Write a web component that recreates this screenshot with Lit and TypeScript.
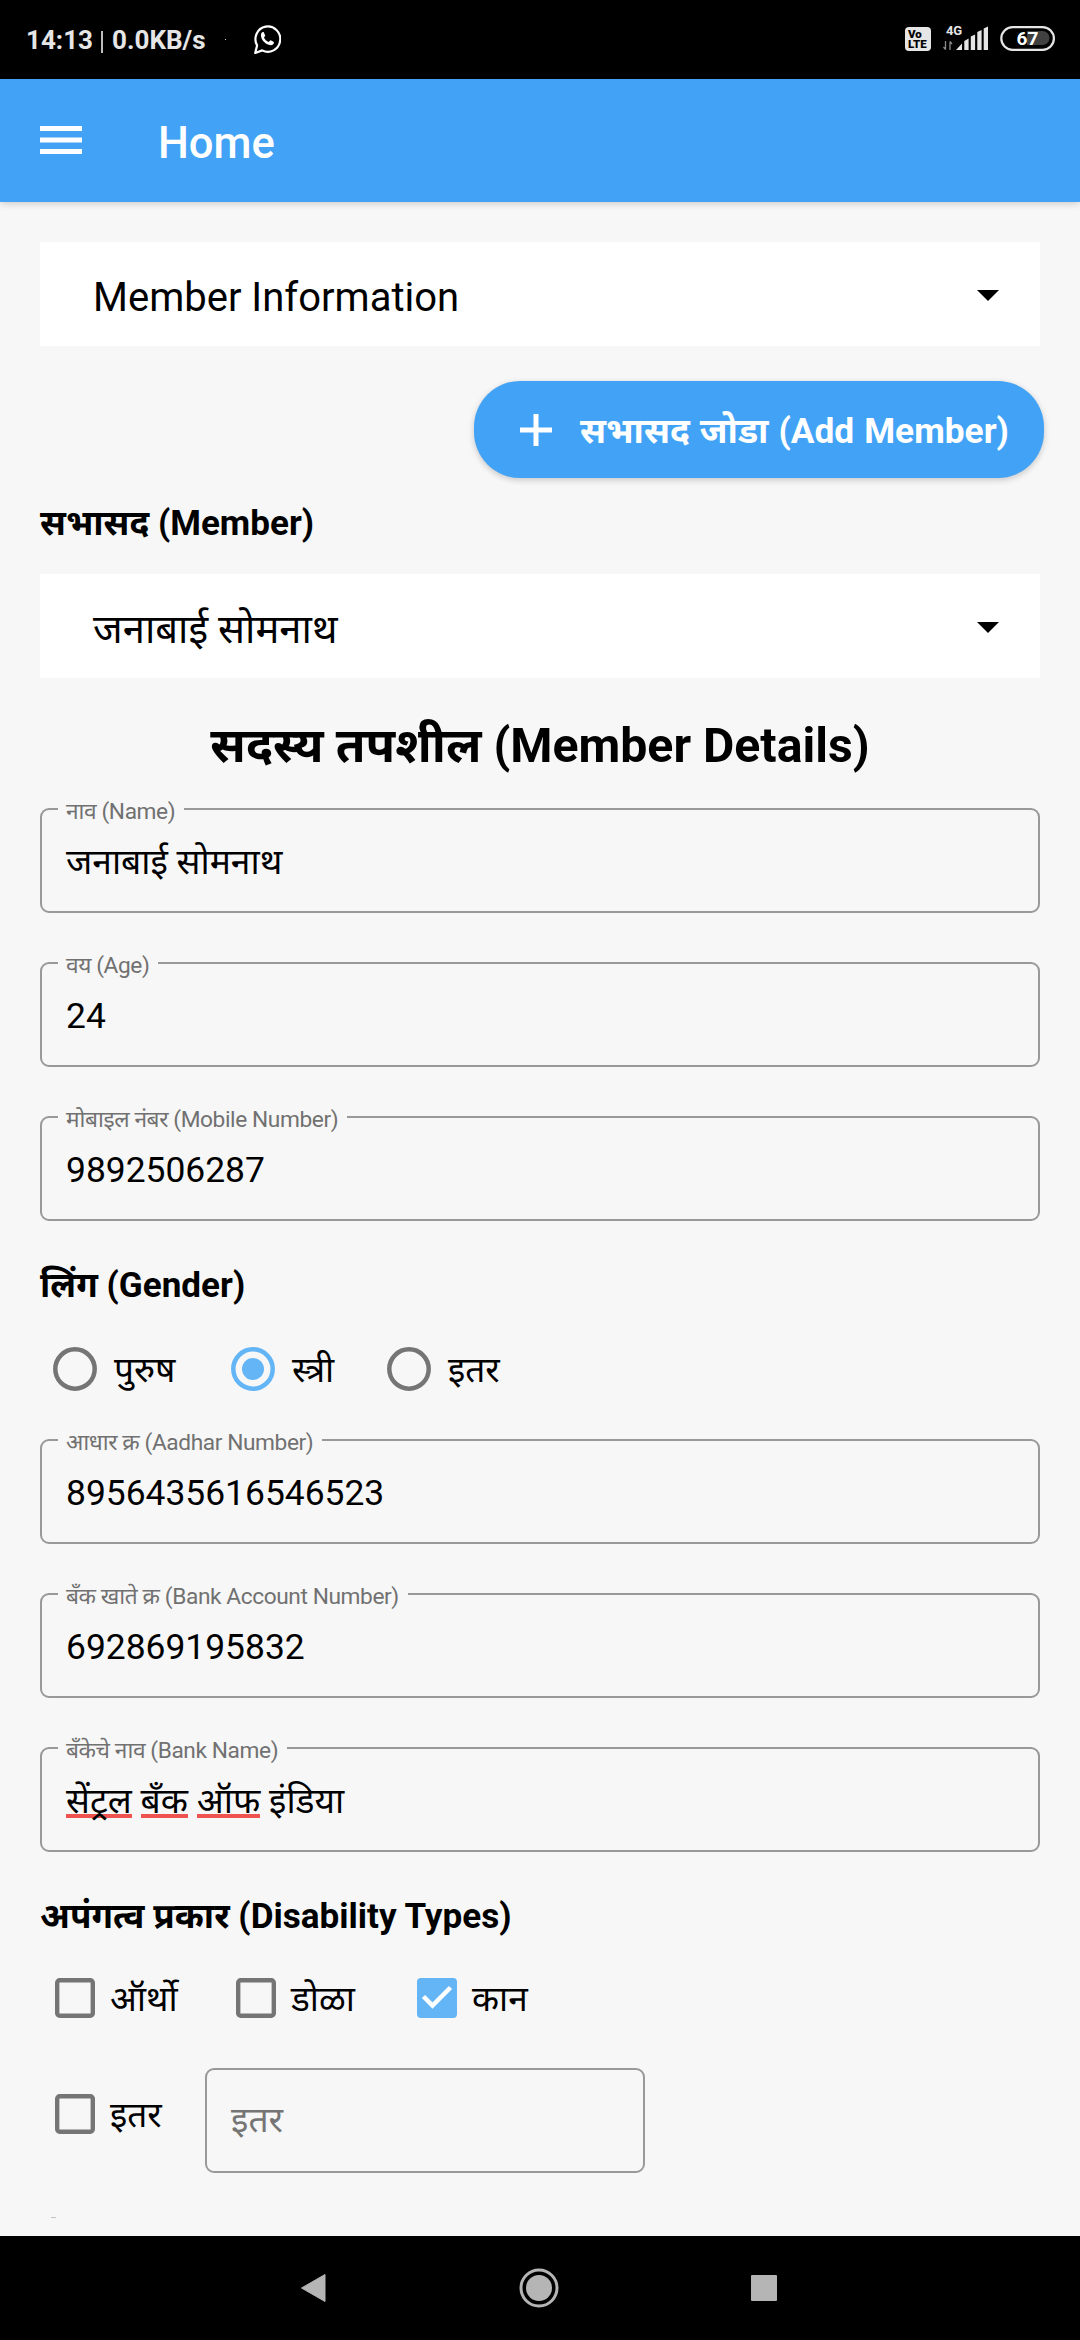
import { LitElement, html, css, svg, nothing } from "lit";
import { customElement, property } from "lit/decorators.js";
import { classMap } from "lit/directives/class-map.js";

const textBase = css`
  :host {
    display: block;
    box-sizing: border-box;
    font-family: Roboto, "Noto Sans Devanagari", "Noto Sans", sans-serif;
    color: #000;
  }
  * {
    box-sizing: border-box;
  }
`;

@customElement("status-bar")
class StatusBar extends LitElement {
  static styles = [
    textBase,
    css`
      .bar {
        height: 79px;
        background: #000;
        display: flex;
        align-items: flex-start;
        padding: 24px 25px 0 26px;
        color: #e6e6e6;
      }
      .clock {
        font-size: 26px;
        font-weight: 700;
        line-height: 33px;
        width: 68px;
      }
      .divider {
        width: 2px;
        height: 22px;
        margin: 7px 9px 0 7px;
        background: #bdbdbd;
      }
      .speed {
        font-size: 26px;
        font-weight: 700;
        line-height: 32px;
        width: 95px;
      }
      .dot {
        width: 1px;
        height: 1px;
        margin: 15px 27px 0 18px;
        background: #ddd;
      }
      svg {
        display: block;
      }
      .spacer {
        flex: 1;
      }
      .volte {
        width: 26px;
        height: 24px;
        margin: 3px 12px 0 0;
        padding: 2px 0 0 3px;
        border-radius: 4px;
        background: #e6e6e6;
        color: #000;
        font-size: 11.5px;
        font-weight: 900;
        line-height: 10px;
      }
      .volte span {
        display: block;
      }
      .signal {
        margin-right: 11px;
      }
    `,
  ];
  render() {
    return html`
      <div class="bar">
        <span class="clock">14:13</span>
        <span class="divider"></span>
        <span class="speed">0.0KB/s</span>
        <span class="dot"></span>
        <svg width="28" height="30" viewBox="0 0 28 30" fill="none">
          <path
            d="M2.2 29 L4.1 21.4 A12.4 12.7 0 1 1 9.2 26.4 Z"
            stroke="#fff"
            stroke-width="2.2"
            stroke-linejoin="round"
          />
          <path
            d="M8.2 9.6c.5-1.2 1.6-1.9 2.6-1.4l1.4 3.3c.1.6-1 1.4-1.2 1.9.8 2 2.6 3.6 4.7 4.5.7-.4 1.3-1.7 2-1.6l3.2 1.7c.3 1.6-1.1 3.1-3.2 3.3-4.9-.4-9.3-5-9.7-9.2 0-.9 0-1.7.2-2.5z"
            fill="#fff"
          />
        </svg>
        <span class="spacer"></span>
        <span class="volte"><span>Vo</span><span>LTE</span></span>
        <svg class="signal" width="46" height="28" viewBox="943 24 46 28">
          <text
            x="946"
            y="35"
            fill="#e6e6e6"
            font-family="Roboto"
            font-size="13"
            font-weight="700"
            textLength="16"
          >4G</text>
          <path
            d="M945.5 41v8.5m0 0l-2-2.5M950 50v-8.5m0 0l2 2.5"
            stroke="#8a8a8a"
            stroke-width="1.3"
            fill="none"
          />
          <path
            d="M956 50l6-6.5V50zM964.3 50V41l4.3-2.5V50zM970.8 50V36.5l4.3-2V50zM977.3 50V32l4.3-2V50zM983.7 50V28.5l4.3-2V50z"
            fill="#e6e6e6"
          />
        </svg>
        <svg width="55" height="28" viewBox="1000 24 55 28">
          <rect x="1001.3" y="27.2" width="52.6" height="22.6" rx="11.3" fill="none" stroke="#e6e6e6" stroke-width="2.2" />
          <path d="M1027 31h15.5a7 7 0 0 1 0 14H1027z" fill="#404040" />
          <text x="1027.5" y="45.2" text-anchor="middle" fill="#fff" font-family="Roboto" font-size="19" font-weight="700">67</text>
        </svg>
      </div>
    `;
  }
}

@customElement("app-bar")
class AppBar extends LitElement {
  static styles = [
    textBase,
    css`
      :host {
        position: relative;
      }
      .bar {
        height: 123px;
        background: #42a3f6;
        box-shadow: 0 1px 8px rgba(0, 0, 0, 0.2);
        display: flex;
        align-items: center;
        padding-left: 40px;
      }
      .menu {
        display: block;
        margin-right: 76px;
        margin-bottom: 2px;
      }
      .title {
        color: #fff;
        font-size: 43.5px;
        font-weight: 500;
        line-height: 56px;
        padding-top: 7px;
      }
    `,
  ];
  render() {
    return html`
      <div class="bar">
        <svg class="menu" width="42" height="28" viewBox="0 0 42 28">
          <path d="M0 2.5h42M0 14h42M0 25.5h42" stroke="#fff" stroke-width="5" />
        </svg>
        <span class="title">Home</span>
      </div>
    `;
  }
}

@customElement("drop-down")
class DropDown extends LitElement {
  @property() value = "";
  static styles = [
    textBase,
    css`
      .box {
        height: 104px;
        background: #fff;
        display: flex;
        align-items: center;
        justify-content: space-between;
        padding: 0 41px 0 53px;
      }
      .value {
        font-size: 40px;
        line-height: 56px;
        padding-top: 7px;
      }
      svg {
        display: block;
        margin-top: 3px;
      }
    `,
  ];
  render() {
    return html`
      <div class="box">
        <span class="value">${this.value}</span>
        <svg width="22" height="11" viewBox="0 0 22 11"><path d="M0 0h22L11 11z" /></svg>
      </div>
    `;
  }
}

@customElement("text-box")
class TextBox extends LitElement {
  @property() label = "";
  @property() value = "";
  @property() placeholder = "";
  @property({ type: Number }) misspelt = 0;
  static styles = [
    textBase,
    css`
      .box {
        position: relative;
        height: 105px;
        border: 2px solid #999;
        border-radius: 9px;
        padding: 28px 24px 0;
        font-size: 35.4px;
        line-height: 48px;
        white-space: pre;
      }
      .label {
        position: absolute;
        left: 16px;
        top: -12px;
        padding: 0 9px 0 8px;
        background: #f7f7f7;
        color: #717171;
        font-size: 22.7px;
        line-height: 28px;
        letter-spacing: -0.4px;
      }
      .hint {
        color: #757575;
        position: relative;
        top: -2px;
      }
      .wrong {
        background: linear-gradient(#ef5350, #ef5350) 0 37px / 100% 4px no-repeat;
        display: inline-block;
      }
    `,
  ];
  render() {
    const words = this.value.split(" ");
    return html`<div class="box">${this.label ? html`<span class="label">${this.label}</span>` : nothing}${this.placeholder
      ? html`<span class="hint">${this.placeholder}</span>`
      : words.map(
          (w, i) => html`${i ? " " : ""}<span class=${classMap({ wrong: i < this.misspelt })}>${w}</span>`,
        )}</div>`;
  }
}

@customElement("choice-item")
class ChoiceItem extends LitElement {
  @property() kind = "radio";
  @property() label = "";
  @property({ type: Boolean }) checked = false;
  static styles = [
    textBase,
    css`
      .item {
        display: flex;
        align-items: center;
      }
      svg {
        display: block;
        flex: none;
      }
      .text {
        font-size: 35.2px;
        line-height: 40px;
        padding-top: 1px;
        margin-bottom: -1px;
      }
      .radio .text {
        margin-left: 17px;
      }
      .check .text {
        margin-left: 15px;
      }
    `,
  ];
  private glyph() {
    if (this.kind === "radio") {
      const c = this.checked ? "#64b5f6" : "#757575";
      return html`<svg width="44" height="44" viewBox="0 0 44 44">
        <circle cx="22" cy="22" r="19.7" fill="none" stroke=${c} stroke-width="4.5" />
        ${this.checked ? svg`<circle cx="22" cy="22" r="11" fill=${c} />` : nothing}
      </svg>`;
    }
    return this.checked
      ? html`<svg width="40" height="40" viewBox="0 0 40 40">
          <rect width="40" height="40" rx="4" fill="#64b5f6" />
          <path d="M6.5 18.5L15.5 27.5L33.5 9.5" fill="none" stroke="#fff" stroke-width="4.5" />
        </svg>`
      : html`<svg width="40" height="40" viewBox="0 0 40 40">
          <rect x="2.2" y="2.2" width="35.6" height="35.6" rx="2.5" fill="none" stroke="#757575" stroke-width="4.4" />
        </svg>`;
  }
  render() {
    return html`<div class="item ${this.kind}">${this.glyph()}<span class="text">${this.label}</span></div>`;
  }
}

@customElement("nav-bar")
class NavBar extends LitElement {
  static styles = [
    textBase,
    css`
      .bar {
        height: 104px;
        background: #000;
        display: flex;
        align-items: center;
        padding: 0 303px 0 300px;
        justify-content: space-between;
      }
      svg {
        display: block;
      }
      .home {
        margin-left: 1px;
      }
    `,
  ];
  render() {
    return html`
      <div class="bar">
        <svg width="26" height="30" viewBox="0 0 26 30"><path d="M1.5 15L25 1.5v27z" fill="#b5b5b5" stroke="#b5b5b5" stroke-linejoin="round" /></svg>
        <svg class="home" width="40" height="40" viewBox="0 0 40 40">
          <circle cx="20" cy="20" r="18" fill="none" stroke="#b5b5b5" stroke-width="3" />
          <circle cx="20" cy="20" r="13" fill="#b5b5b5" />
        </svg>
        <svg width="26" height="26" viewBox="0 0 26 26"><rect width="26" height="26" rx="1" fill="#b5b5b5" /></svg>
      </div>
    `;
  }
}

@customElement("app-root")
class AppRoot extends LitElement {
  static styles = [
    textBase,
    css`
      .screen {
        width: 1080px;
        height: 2340px;
        overflow: hidden;
        background: #f7f7f7;
        display: flex;
        flex-direction: column;
      }
      .page {
        flex: 1;
        min-height: 0;
        overflow: hidden;
        display: flex;
        flex-direction: column;
        padding: 40px 40px 0;
      }
      .add {
        align-self: flex-end;
        display: flex;
        align-items: center;
        width: 570px;
        height: 97px;
        margin: 35px -4px 21px 0;
        padding-left: 46px;
        border-radius: 46px;
        background: #42a3f6;
        box-shadow: 0 2px 6px rgba(0, 0, 0, 0.2);
        color: #fff;
        font-size: 35.3px;
        font-weight: 700;
        line-height: 48px;
        word-spacing: 1.2px;
        white-space: nowrap;
      }
      .add svg {
        display: block;
        margin-right: 28px;
      }
      .add span {
        padding-top: 3px;
      }
      .heading {
        font-size: 35.1px;
        font-weight: 700;
        line-height: 48px;
      }
      .member {
        margin-bottom: 27px;
      }
      .title {
        margin: 36px 0 30px;
        text-align: center;
        font-size: 48.2px;
        font-weight: 700;
        line-height: 64px;
      }
      .fields {
        display: flex;
        flex-direction: column;
        gap: 49px;
        margin-bottom: 40px;
      }
      .radios {
        display: grid;
        grid-template-columns: 178px 156px auto;
        margin: 38px 0 48px 13px;
      }
      .checks {
        display: grid;
        grid-template-columns: 181px 181px auto;
        margin: 38px 0 50px 15px;
      }
      .other {
        display: flex;
        padding-left: 15px;
      }
      .other choice-item {
        width: 150px;
        padding-top: 26px;
      }
      .other text-box {
        width: 440px;
      }
      .next {
        width: 5px;
        height: 1px;
        margin: 44px 0 0 11px;
        background: #c4c4c4;
      }
    `,
  ];
  render() {
    return html`
      <div class="screen">
        <status-bar></status-bar>
        <app-bar></app-bar>
        <div class="page">
          <drop-down value="Member Information"></drop-down>
          <div class="add">
            <svg width="32" height="32" viewBox="0 0 32 32">
              <path d="M0 16h32M16 0v32" stroke="#fff" stroke-width="5" />
            </svg>
            <span>सभासद जोडा (Add Member)</span>
          </div>
          <div class="heading member">सभासद (Member)</div>
          <drop-down value="जनाबाई सोमनाथ"></drop-down>
          <div class="title">सदस्य तपशील (Member Details)</div>
          <div class="fields">
            <text-box label="नाव (Name)" value="जनाबाई सोमनाथ"></text-box>
            <text-box label="वय (Age)" value="24"></text-box>
            <text-box label="मोबाइल नंबर (Mobile Number)" value="9892506287"></text-box>
          </div>
          <div class="heading">लिंग (Gender)</div>
          <div class="radios">
            <choice-item label="पुरुष"></choice-item>
            <choice-item label="स्त्री" checked></choice-item>
            <choice-item label="इतर"></choice-item>
          </div>
          <div class="fields">
            <text-box label="आधार क्र (Aadhar Number)" value="8956435616546523"></text-box>
            <text-box label="बँक खाते क्र (Bank Account Number)" value="692869195832"></text-box>
            <text-box label="बँकेचे नाव (Bank Name)" value="सेंट्रल बँक ऑफ इंडिया" misspelt="3"></text-box>
          </div>
          <div class="heading">अपंगत्व प्रकार (Disability Types)</div>
          <div class="checks">
            <choice-item kind="check" label="ऑर्थो"></choice-item>
            <choice-item kind="check" label="डोळा"></choice-item>
            <choice-item kind="check" label="कान" checked></choice-item>
          </div>
          <div class="other">
            <choice-item kind="check" label="इतर"></choice-item>
            <text-box placeholder="इतर"></text-box>
          </div>
          <div class="next"></div>
        </div>
        <nav-bar></nav-bar>
      </div>
    `;
  }
}
